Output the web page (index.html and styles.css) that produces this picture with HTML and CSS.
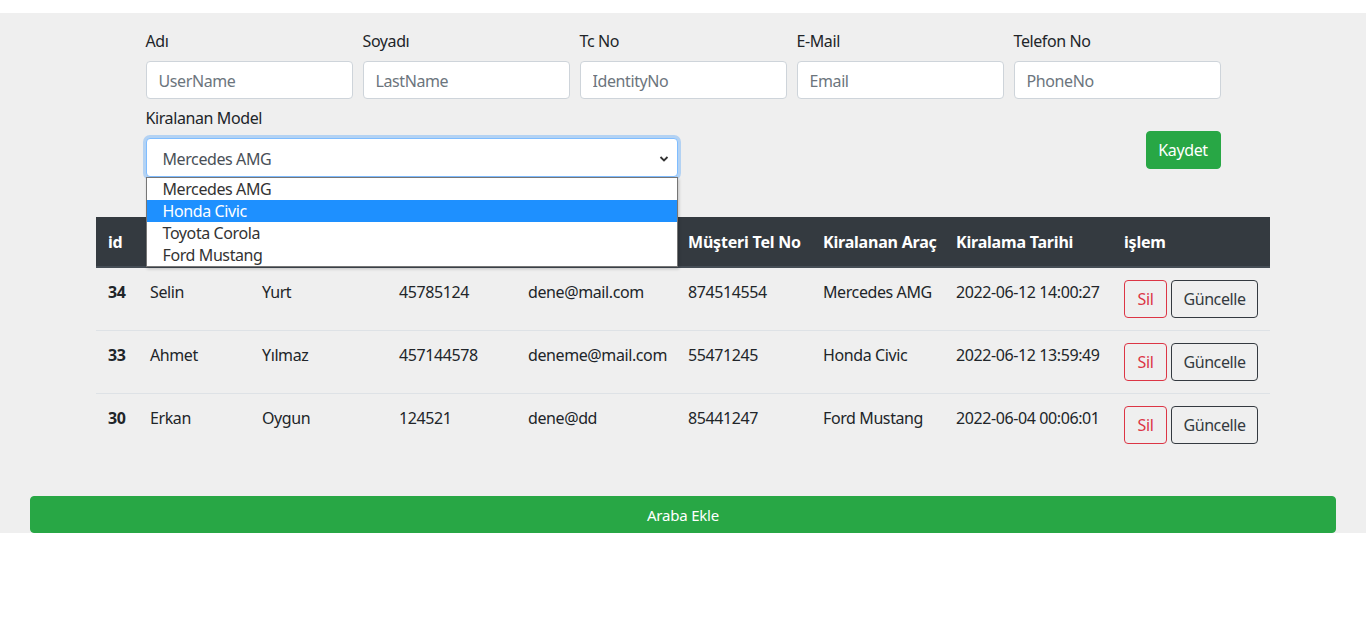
FILE: index.html
```html
<!DOCTYPE html>
<html lang="tr">
<head>
<meta charset="utf-8">
<title>Kiralama</title>
<link rel="stylesheet" href="styles.css">
</head>
<body>
<main class="page">
  <form class="form">
    <div class="fields">
      <div class="field"><label class="label">Adı</label><input class="input" placeholder="UserName"></div>
      <div class="field"><label class="label">Soyadı</label><input class="input" placeholder="LastName"></div>
      <div class="field"><label class="label">Tc No</label><input class="input" placeholder="IdentityNo"></div>
      <div class="field"><label class="label">E-Mail</label><input class="input" placeholder="Email"></div>
      <div class="field"><label class="label">Telefon No</label><input class="input" placeholder="PhoneNo"></div>
    </div>
    <div class="model-row">
      <div class="model">
        <label class="label">Kiralanan Model</label>
        <div class="select-wrap">
          <div class="select">
            <span>Mercedes AMG</span>
            <svg class="chev" width="10" height="8" viewBox="0 0 10 8"><polyline points="1.5,2 5,5.5 8.5,2" fill="none" stroke="#333" stroke-width="1.8"/></svg>
          </div>
          <ul class="options">
            <li class="option">Mercedes AMG</li>
            <li class="option active">Honda Civic</li>
            <li class="option">Toyota Corola</li>
            <li class="option">Ford Mustang</li>
          </ul>
        </div>
      </div>
      <button type="button" class="btn btn-save">Kaydet</button>
    </div>
  </form>

  <table class="table">
    <thead>
      <tr>
        <th class="c-id">id</th>
        <th class="c-ad">Adı</th>
        <th class="c-soyad">Soyadı</th>
        <th class="c-tc">Tc No</th>
        <th class="c-mail">Mail</th>
        <th class="c-tel">Müşteri Tel No</th>
        <th class="c-arac">Kiralanan Araç</th>
        <th class="c-tarih">Kiralama Tarihi</th>
        <th class="c-islem">işlem</th>
      </tr>
    </thead>
    <tbody>
      <tr>
        <td class="bold">34</td><td>Selin</td><td>Yurt</td><td>45785124</td><td>dene@mail.com</td><td>874514554</td><td>Mercedes AMG</td><td>2022-06-12 14:00:27</td>
        <td><div class="actions"><button type="button" class="btn btn-del">Sil</button><button type="button" class="btn btn-upd">Güncelle</button></div></td>
      </tr>
      <tr>
        <td class="bold">33</td><td>Ahmet</td><td>Yılmaz</td><td>457144578</td><td>deneme@mail.com</td><td>55471245</td><td>Honda Civic</td><td>2022-06-12 13:59:49</td>
        <td><div class="actions"><button type="button" class="btn btn-del">Sil</button><button type="button" class="btn btn-upd">Güncelle</button></div></td>
      </tr>
      <tr>
        <td class="bold">30</td><td>Erkan</td><td>Oygun</td><td>124521</td><td>dene@dd</td><td>85441247</td><td>Ford Mustang</td><td>2022-06-04 00:06:01</td>
        <td><div class="actions"><button type="button" class="btn btn-del">Sil</button><button type="button" class="btn btn-upd">Güncelle</button></div></td>
      </tr>
    </tbody>
  </table>

  <button type="button" class="btn btn-add">Araba Ekle</button>
</main>
</body>
</html>
```

FILE: styles.css
```css
* { box-sizing: border-box; }
html, body { margin: 0; padding: 0; background: #fff; }
body {
  font-family: "Noto Sans", "Open Sans", sans-serif;
  font-size: 16px;
  line-height: 24px;
  letter-spacing: -0.4px;
  color: #212529;
}
.page {
  margin-top: 13px;
  background: #efefef;
  padding-top: 16px;
  display: flex;
  flex-direction: column;
  align-items: center;
}
.form { width: 1075px; }
.fields {
  display: grid;
  grid-template-columns: repeat(5, 207px);
  column-gap: 10px;
}
.field { display: flex; flex-direction: column; }
.label { display: block; margin-bottom: 8px; line-height: 24px; }
.input {
  height: 38px;
  border: 1px solid #ced4da;
  border-radius: 4px;
  background: #fff;
  padding: 7px 12px 5px;
  font: inherit;
  letter-spacing: -0.4px;
  color: #495057;
  outline: none;
}
.input::placeholder { color: #6c757d; }
.model-row {
  margin-top: 7px;
  display: flex;
  justify-content: space-between;
  align-items: flex-start;
}
.model { width: 532px; }
.select-wrap { position: relative; }
.select {
  height: 39px;
  border: 1px solid #80bdff;
  border-radius: 4px;
  background: #fff;
  box-shadow: 0 0 0 3px rgba(0, 123, 255, 0.25);
  padding: 7px 12px 5px 16px;
  display: flex;
  align-items: center;
  justify-content: space-between;
  color: #495057;
}
.chev { margin-right: -4px; }
.options {
  position: absolute;
  top: 39px;
  left: 0;
  width: 532px;
  margin: 0;
  padding: 0;
  list-style: none;
  background: #fff;
  border: 1px solid #767676;
  box-shadow: 1px 2px 3px rgba(0, 0, 0, 0.2);
  z-index: 10;
}
.option {
  height: 22px;
  line-height: 22px;
  padding-left: 16px;
  color: #333;
}
.option.active { background: #1e90ff; color: #fff; }
.btn {
  font: inherit;
  line-height: 24px;
  padding: 6px 12px;
  border-radius: 4px;
  border: 1px solid transparent;
  cursor: pointer;
  background: transparent;
  letter-spacing: -0.4px;
}
.btn-save {
  margin-top: 25px;
  width: 75px;
  height: 38px;
  background: #28a745;
  border-color: #28a745;
  color: #fff;
  padding: 6px 0;
}
.table {
  margin-top: 40px;
  width: 1174px;
  border-collapse: collapse;
  table-layout: fixed;
}
.table th, .table td {
  text-align: left;
  vertical-align: top;
  padding: 12px;
  white-space: nowrap;
}
.table th {
  background: #343a40;
  color: #fff;
  font-weight: 700;
  letter-spacing: -0.2px;
  border-top: 1px solid #343a40;
  border-bottom: 2px solid #454d55;
}
.table td { border-top: 1px solid #dee2e6; }
.table tbody tr:first-child td { border-top: 0; }
.bold { font-weight: 700; }
.c-id { width: 42px; }
.c-ad { width: 112px; }
.c-soyad { width: 137px; }
.c-tc { width: 129px; }
.c-mail { width: 160px; }
.c-tel { width: 135px; }
.c-arac { width: 133px; }
.c-tarih { width: 168px; }
.c-islem { width: 158px; }
.actions { display: flex; gap: 4px; }
.btn-del {
  width: 43px;
  height: 38px;
  padding: 6px 0;
  color: #dc3545;
  border-color: #dc3545;
}
.btn-upd {
  width: 87px;
  height: 38px;
  padding: 6px 0;
  color: #343a40;
  border-color: #343a40;
}
.btn-add {
  margin-top: 40px;
  width: 1306px;
  height: 37px;
  background: #28a745;
  border-color: #28a745;
  color: #fff;
  padding: 6px 0;
  font-size: 15px;
  letter-spacing: -0.2px;
}
```
